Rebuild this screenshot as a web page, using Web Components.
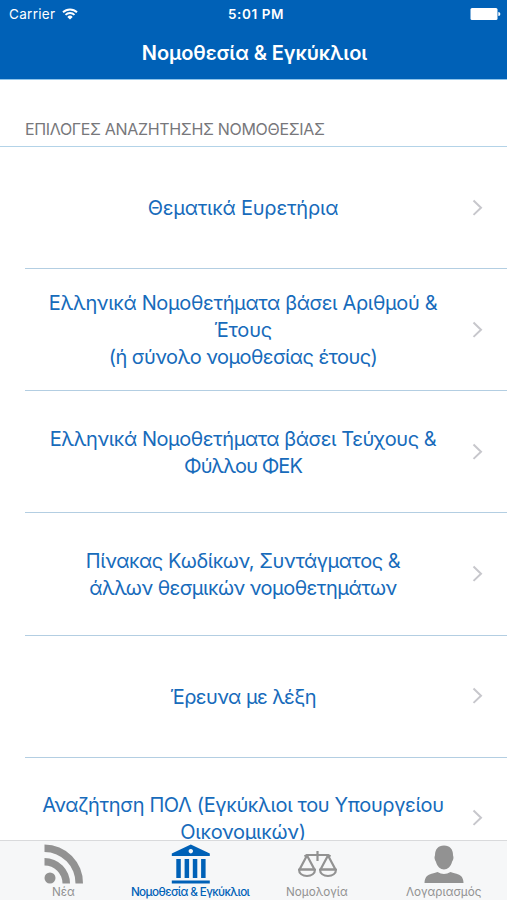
<!DOCTYPE html>
<html lang="el">
<head>
<meta charset="utf-8">
<title>Νομοθεσία &amp; Εγκύκλιοι</title>
<style>
    body {
        margin: 0;
        background: #fff;
        font-family: Inter, "Liberation Sans", sans-serif;
    }
</style>
</head>
<body>
<app-screen>
    <status-bar slot="top" carrier="Carrier" time="5:01 PM"></status-bar>
    <nav-bar slot="top">Νομοθεσία &amp; Εγκύκλιοι</nav-bar>
    <section-title>ΕΠΙΛΟΓΕΣ ΑΝΑΖΗΤΗΣΗΣ ΝΟΜΟΘΕΣΙΑΣ</section-title>
    <list-row>
        <row-line tracking="-0.22">Θεματικά Ευρετήρια</row-line>
    </list-row>
    <list-row>
        <row-line tracking="-0.37">Ελληνικά Νομοθετήματα βάσει Αριθμού &amp;</row-line>
        <row-line tracking="-0.2">Έτους</row-line>
        <row-line tracking="-0.57">(ή σύνολο νομοθεσίας έτους)</row-line>
    </list-row>
    <list-row>
        <row-line tracking="-0.45">Ελληνικά Νομοθετήματα βάσει Τεύχους &amp;</row-line>
        <row-line tracking="-0.95">Φύλλου ΦΕΚ</row-line>
    </list-row>
    <list-row>
        <row-line tracking="-0.47">Πίνακας Κωδίκων, Συντάγματος &amp;</row-line>
        <row-line tracking="-0.53">άλλων θεσμικών νομοθετημάτων</row-line>
    </list-row>
    <list-row>
        <row-line tracking="-0.55">Έρευνα με λέξη</row-line>
    </list-row>
    <list-row>
        <row-line tracking="-0.37">Αναζήτηση ΠΟΛ (Εγκύκλιοι του Υπουργείου</row-line>
        <row-line tracking="-0.3">Οικονομικών)</row-line>
    </list-row>
    <tab-bar slot="bottom">
        <tab-item icon="feed">Νέα</tab-item>
        <tab-item icon="bank" active>Νομοθεσία &amp; Εγκύκλιοι</tab-item>
        <tab-item icon="scales">Νομολογία</tab-item>
        <tab-item icon="person">Λογαριασμός</tab-item>
    </tab-bar>
</app-screen>

<script>
class AppScreen extends HTMLElement {
    constructor() {
        super();
        this.attachShadow({mode: 'open'});
        this.shadowRoot.innerHTML = `
        <style>
            :host {
                display: flex;
                flex-direction: column;
                height: 900px;
                overflow: hidden;
            }
            header {
                flex: none;
                height: 80px;
                background-color: #0061b7;
                border-bottom: 1px solid #8fc4ea;
                box-sizing: border-box;
                color: #fff;
            }
            main {
                flex: 1;
                min-height: 0;
                overflow: hidden;
            }
        </style>
        <header><slot name="top"></slot></header>
        <main><slot></slot></main>
        <slot name="bottom"></slot>
        `;
    }
}
window.customElements.define('app-screen', AppScreen);

class StatusBar extends HTMLElement {
    constructor() {
        super();
        this.attachShadow({mode: 'open'});
        this.shadowRoot.innerHTML = `
        <style>
            :host {
                display: grid;
                grid-template-columns: 1fr auto 1fr;
                align-items: center;
                height: 27px;
                padding: 0 6px 0 9px;
                font-size: 13.5px;
            }
            .left {
                display: flex;
                align-items: center;
                gap: 7px;
                letter-spacing: 0.3px;
            }
            .time {
                margin-left: 2px;
                font-weight: 600;
                font-size: 13.5px;
                letter-spacing: 0.55px;
            }
            .battery {
                justify-self: end;
            }
            svg {
                display: block;
            }
        </style>
        <div class="left">
            <span>${this.getAttribute('carrier')}</span>
            <svg width="16" height="12" viewBox="0 0 16 12" fill="none" stroke="#fff" stroke-width="1.9">
                <path d="M1 4.300a10 10 0 0 1 14 0M3.500 6.900a6.400 6.400 0 0 1 9 0"/>
                <path d="M8 11.600 5.300 8.900a3.900 3.900 0 0 1 5.400 0z" fill="#fff" stroke="none"/>
            </svg>
        </div>
        <span class="time">${this.getAttribute('time')}</span>
        <svg class="battery" width="31" height="12" viewBox="0 0 31 12" fill="#fff">
            <rect x="0.5" width="27" height="12" rx="1.5"/>
            <path d="M28.300 4c1.600 0 2 1 2 2s-.4 2-2 2z"/>
        </svg>
        `;
    }
}
window.customElements.define('status-bar', StatusBar);

class NavBar extends HTMLElement {
    constructor() {
        super();
        this.attachShadow({mode: 'open'});
        this.shadowRoot.innerHTML = `
        <style>
            :host {
                display: flex;
                align-items: center;
                justify-content: center;
                height: 51px;
                padding-left: 2px;
                font-size: 20px;
                font-weight: 600;
                letter-spacing: -0.1px;
                white-space: nowrap;
            }
        </style>
        <span><slot></slot></span>
        `;
    }
}
window.customElements.define('nav-bar', NavBar);

class SectionTitle extends HTMLElement {
    constructor() {
        super();
        this.attachShadow({mode: 'open'});
        this.shadowRoot.innerHTML = `
        <style>
            :host {
                display: flex;
                align-items: flex-end;
                height: 67px;
                box-sizing: border-box;
                padding: 0 25px 7px;
                border-bottom: 1px solid #b3d3e8;
                color: #77777b;
                font-size: 16px;
                letter-spacing: -0.34px;
                line-height: 20px;
                white-space: nowrap;
            }
        </style>
        <span><slot></slot></span>
        `;
    }
}
window.customElements.define('section-title', SectionTitle);

class ListRow extends HTMLElement {
    constructor() {
        super();
        this.attachShadow({mode: 'open'});
        this.shadowRoot.innerHTML = `
        <style>
            :host {
                display: flex;
                align-items: center;
                height: 122.15px;
                box-sizing: border-box;
                margin-left: 25px;
                padding-right: 24px;
                border-bottom: 1px solid #b3cee2;
                color: #176bbb;
                font-size: 20px;
                line-height: 27px;
            }
            .label {
                flex: 1;
                padding-top: 2px;
                text-align: center;
                white-space: nowrap;
            }
            svg {
                flex: none;
                margin-left: 11px;
            }
        </style>
        <div class="label"><slot></slot></div>
        <svg width="11" height="18" viewBox="0 0 11 18" fill="none" stroke="#c7c7cc" stroke-width="2">
            <path d="M1.500 1.500 9 8.700l-7.500 7.200"/>
        </svg>
        `;
    }
}
window.customElements.define('list-row', ListRow);

class RowLine extends HTMLElement {
    constructor() {
        super();
        this.attachShadow({mode: 'open'});
        this.shadowRoot.innerHTML = `
        <style>
            :host {
                display: block;
                letter-spacing: ${this.getAttribute('tracking')}px;
            }
        </style>
        <slot></slot>
        `;
    }
}
window.customElements.define('row-line', RowLine);

class TabBar extends HTMLElement {
    constructor() {
        super();
        this.attachShadow({mode: 'open'});
        this.shadowRoot.innerHTML = `
        <style>
            :host {
                display: grid;
                grid-template-columns: repeat(4, 1fr);
                flex: none;
                height: 60px;
                box-sizing: border-box;
                border-top: 1px solid #d9dadc;
                background-color: #f6f7f8;
            }
        </style>
        <slot></slot>
        `;
    }
}
window.customElements.define('tab-bar', TabBar);

const icons = {
    feed: `
        <g transform="translate(1 0)">
            <circle cx="6" cy="34" r="5.500"/>
            <path d="M.5 0.500A38.500 38.500 0 0 1 39 39.500H31.500A31 31 0 0 0 .5 8zM.5 14A25.500 25.500 0 0 1 26 39.500H18.500A18 18 0 0 0 .5 21.500z"/>
        </g>`,
    bank: `
        <g transform="translate(.8 0)">
            <path fill-rule="evenodd" d="M20 0.500 39 9.500V12H1V9.500zM20 5a2.200 2.200 0 1 0 .01 0z"/>
            <path d="M5.500 15h4.500v19H5.500zM13.800 15h4.500v19h-4.500zM22 15h4.500v19H22zM30.300 15h4.500v19h-4.500zM1 36.500h38v3H1z"/>
        </g>`,
    scales: `
        <g fill="none" stroke="currentColor" stroke-width="2.2" stroke-linejoin="round">
            <path d="M20.500 7v10M7.500 12.500 10 11h21l2.500 1.500"/>
            <path d="M10 11.500 2.500 25.500h15zM31 11.500l-7.500 14h15z"/>
            <path d="M2 25.500c0 4 3.500 6.500 8 6.500s8-2.500 8-6.500zM23 25.500c0 4 3.500 6.500 8 6.500s8-2.500 8-6.500z"/>
        </g>`,
    person: `
        <path d="M20 1.500c6 0 9 4 9 9.500 0 1 .8 1.500.3 4-.4 1.600-1 2-1.300 3-1 4.500-4.500 7.500-8 7.500s-7-3-8-7.500c-.3-1-.9-1.400-1.300-3-.5-2.500.3-3 .3-4 0-5.500 3-9.500 9-9.500z"/>
        <path d="M13.500 28q6.500 4 13 0c4 1.500 8.500 2 10.500 4 1.500 1.500 2.500 4 2.500 7H.5c0-3 1-5.500 2.500-7 2-2 6.500-2.500 10.500-4z"/>`
};

class TabItem extends HTMLElement {
    constructor() {
        super();
        this.attachShadow({mode: 'open'});
        this.shadowRoot.innerHTML = `
        <style>
            :host {
                display: flex;
                flex-direction: column;
                align-items: center;
                min-width: 0;
                padding-top: 3px;
                color: #929292;
                font-size: 11.7px;
                line-height: 16px;
                white-space: nowrap;
            }
            :host([active]) {
                color: #0061b7;
                font-weight: 500;
                letter-spacing: -0.6px;
            }
            svg {
                display: block;
                overflow: visible;
            }
        </style>
        <svg width="40" height="40" viewBox="0 0 40 40" fill="currentColor">${icons[this.getAttribute('icon')]}</svg>
        <span><slot></slot></span>
        `;
    }
}
window.customElements.define('tab-item', TabItem);
</script>
</body>
</html>
